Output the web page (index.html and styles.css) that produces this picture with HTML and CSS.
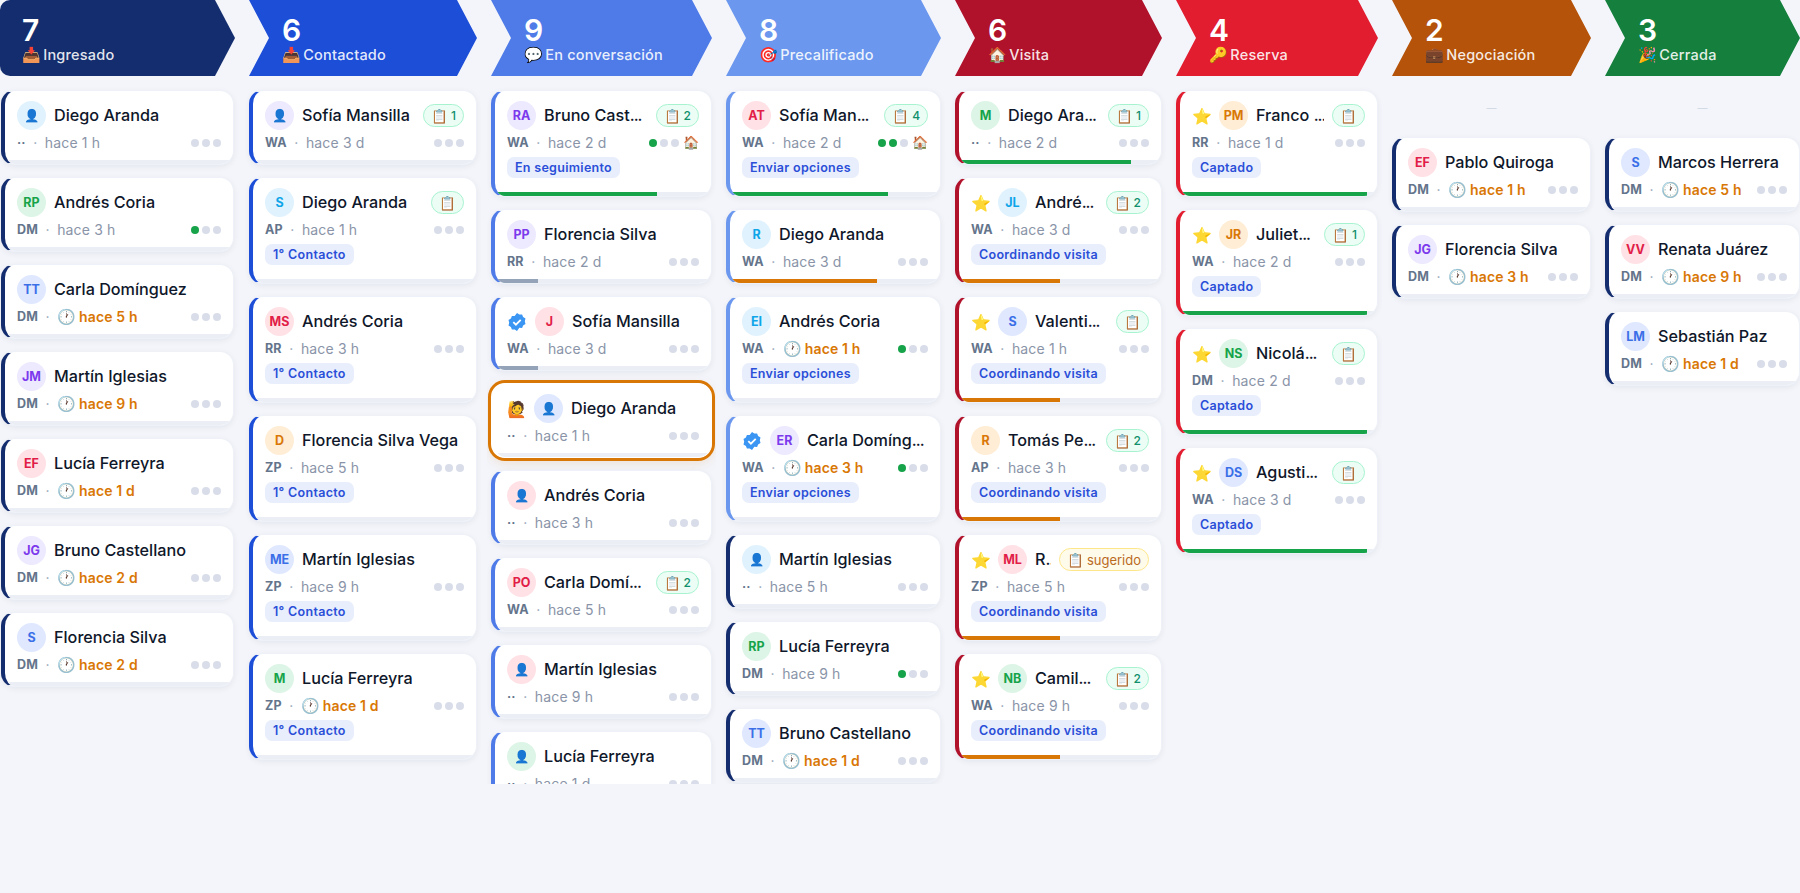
FILE: index.html
```html
<!DOCTYPE html>
<html lang="es">
<head>
<meta charset="UTF-8">
<title>Pipeline</title>
<link rel="stylesheet" href="styles.css">
</head>
<body>
<div class="board">

<div class="col col-ingresado">
  <div class="stage first"><div class="count">7</div><div class="label"><span class="emo">📥</span> Ingresado</div></div>
  <div class="cards">
    <div class="card"><div class="body"><div class="top"><span class="av sky">👤</span><span class="name">Diego Aranda</span></div><div class="meta"><b>··</b><i>·</i><span class="ago">hace 1 h</span><span class="dots"><u></u><u></u><u></u></span></div></div><div class="track"></div></div>
    <div class="card"><div class="body"><div class="top"><span class="av green">RP</span><span class="name">Andrés Coria</span></div><div class="meta"><b>DM</b><i>·</i><span class="ago">hace 3 h</span><span class="dots"><u class="on"></u><u></u><u></u></span></div></div><div class="track"></div></div>
    <div class="card"><div class="body"><div class="top"><span class="av blue">TT</span><span class="name">Carla Domínguez</span></div><div class="meta"><b>DM</b><i>·</i><span class="ago late"><span class="clock">🕐</span> hace 5 h</span><span class="dots"><u></u><u></u><u></u></span></div></div><div class="track"></div></div>
    <div class="card"><div class="body"><div class="top"><span class="av purple">JM</span><span class="name">Martín Iglesias</span></div><div class="meta"><b>DM</b><i>·</i><span class="ago late"><span class="clock">🕐</span> hace 9 h</span><span class="dots"><u></u><u></u><u></u></span></div></div><div class="track"></div></div>
    <div class="card"><div class="body"><div class="top"><span class="av red">EF</span><span class="name">Lucía Ferreyra</span></div><div class="meta"><b>DM</b><i>·</i><span class="ago late"><span class="clock">🕐</span> hace 1 d</span><span class="dots"><u></u><u></u><u></u></span></div></div><div class="track"></div></div>
    <div class="card"><div class="body"><div class="top"><span class="av purple">JG</span><span class="name">Bruno Castellano</span></div><div class="meta"><b>DM</b><i>·</i><span class="ago late"><span class="clock">🕐</span> hace 2 d</span><span class="dots"><u></u><u></u><u></u></span></div></div><div class="track"></div></div>
    <div class="card"><div class="body"><div class="top"><span class="av blue">S</span><span class="name">Florencia Silva</span></div><div class="meta"><b>DM</b><i>·</i><span class="ago late"><span class="clock">🕐</span> hace 2 d</span><span class="dots"><u></u><u></u><u></u></span></div></div><div class="track"></div></div>
  </div>
</div>

<div class="col col-contactado">
  <div class="stage"><div class="count">6</div><div class="label"><span class="emo">📥</span> Contactado</div></div>
  <div class="cards">
    <div class="card"><div class="body"><div class="top"><span class="av purple">👤</span><span class="name">Sofía Mansilla</span><span class="badge">📋 <em>1</em></span></div><div class="meta"><b>WA</b><i>·</i><span class="ago">hace 3 d</span><span class="dots"><u></u><u></u><u></u></span></div></div><div class="track"></div></div>
    <div class="card"><div class="body"><div class="top"><span class="av sky">S</span><span class="name">Diego Aranda</span><span class="badge">📋</span></div><div class="meta"><b>AP</b><i>·</i><span class="ago">hace 1 h</span><span class="dots"><u></u><u></u><u></u></span></div><div class="chip">1° Contacto</div></div><div class="track"></div></div>
    <div class="card"><div class="body"><div class="top"><span class="av red">MS</span><span class="name">Andrés Coria</span></div><div class="meta"><b>RR</b><i>·</i><span class="ago">hace 3 h</span><span class="dots"><u></u><u></u><u></u></span></div><div class="chip">1° Contacto</div></div><div class="track"></div></div>
    <div class="card"><div class="body"><div class="top"><span class="av orange">D</span><span class="name">Florencia Silva Vega</span></div><div class="meta"><b>ZP</b><i>·</i><span class="ago">hace 5 h</span><span class="dots"><u></u><u></u><u></u></span></div><div class="chip">1° Contacto</div></div><div class="track"></div></div>
    <div class="card"><div class="body"><div class="top"><span class="av blue">ME</span><span class="name">Martín Iglesias</span></div><div class="meta"><b>ZP</b><i>·</i><span class="ago">hace 9 h</span><span class="dots"><u></u><u></u><u></u></span></div><div class="chip">1° Contacto</div></div><div class="track"></div></div>
    <div class="card"><div class="body"><div class="top"><span class="av green">M</span><span class="name">Lucía Ferreyra</span></div><div class="meta"><b>ZP</b><i>·</i><span class="ago late"><span class="clock">🕐</span> hace 1 d</span><span class="dots"><u></u><u></u><u></u></span></div><div class="chip">1° Contacto</div></div><div class="track"></div></div>
  </div>
</div>

<div class="col col-conversacion">
  <div class="stage"><div class="count">9</div><div class="label"><span class="emo">💬</span> En conversación</div></div>
  <div class="cards">
    <div class="card"><div class="body"><div class="top"><span class="av purple">RA</span><span class="name">Bruno Cast<span class="more">...</span></span><span class="badge">📋 <em>2</em></span></div><div class="meta"><b>WA</b><i>·</i><span class="ago">hace 2 d</span><span class="dots"><u class="on"></u><u></u><u></u><span class="home">🏠</span></span></div><div class="chip">En seguimiento</div></div><div class="track"><div class="fill ok" style="width:75%"></div></div></div>
    <div class="card"><div class="body"><div class="top"><span class="av purple">PP</span><span class="name">Florencia Silva</span></div><div class="meta"><b>RR</b><i>·</i><span class="ago">hace 2 d</span><span class="dots"><u></u><u></u><u></u></span></div></div><div class="track"><div class="fill low" style="width:20%"></div></div></div>
    <div class="card"><div class="body"><div class="top"><svg class="check" viewBox="0 0 20 20"><path d="M10 1l2.3 1.6 2.8-.2 1 2.6 2.4 1.5-.7 2.7.7 2.7-2.4 1.5-1 2.6-2.8-.2L10 19l-2.3-1.6-2.8.2-1-2.6-2.4-1.5.7-2.7-.7-2.7L3.9 6.5l1-2.6 2.8.2z" fill="#3b96f3"/><path d="M6.3 10.2l2.6 2.5 4.8-4.8" fill="none" stroke="#fff" stroke-width="1.8"/></svg><span class="av red">J</span><span class="name">Sofía Mansilla</span></div><div class="meta"><b>WA</b><i>·</i><span class="ago">hace 3 d</span><span class="dots"><u></u><u></u><u></u></span></div></div><div class="track"><div class="fill low" style="width:20%"></div></div></div>
    <div class="card hot"><div class="body"><div class="top"><span class="mark">🙋</span><span class="av blue">👤</span><span class="name">Diego Aranda</span></div><div class="meta"><b>··</b><i>·</i><span class="ago">hace 1 h</span><span class="dots"><u></u><u></u><u></u></span></div></div><div class="track"></div></div>
    <div class="card"><div class="body"><div class="top"><span class="av red">👤</span><span class="name">Andrés Coria</span></div><div class="meta"><b>··</b><i>·</i><span class="ago">hace 3 h</span><span class="dots"><u></u><u></u><u></u></span></div></div><div class="track"></div></div>
    <div class="card"><div class="body"><div class="top"><span class="av red">PO</span><span class="name">Carla Domí<span class="more">...</span></span><span class="badge">📋 <em>2</em></span></div><div class="meta"><b>WA</b><i>·</i><span class="ago">hace 5 h</span><span class="dots"><u></u><u></u><u></u></span></div></div><div class="track"></div></div>
    <div class="card"><div class="body"><div class="top"><span class="av red">👤</span><span class="name">Martín Iglesias</span></div><div class="meta"><b>··</b><i>·</i><span class="ago">hace 9 h</span><span class="dots"><u></u><u></u><u></u></span></div></div><div class="track"></div></div>
    <div class="card"><div class="body"><div class="top"><span class="av green">👤</span><span class="name">Lucía Ferreyra</span></div><div class="meta"><b>··</b><i>·</i><span class="ago">hace 1 d</span><span class="dots"><u></u><u></u><u></u></span></div></div><div class="track"></div></div>
  </div>
</div>

<div class="col col-precalificado">
  <div class="stage"><div class="count">8</div><div class="label"><span class="emo">🎯</span> Precalificado</div></div>
  <div class="cards">
    <div class="card"><div class="body"><div class="top"><span class="av red">AT</span><span class="name">Sofía Man<span class="more">...</span></span><span class="badge">📋 <em>4</em></span></div><div class="meta"><b>WA</b><i>·</i><span class="ago">hace 2 d</span><span class="dots"><u class="on"></u><u class="on"></u><u></u><span class="home">🏠</span></span></div><div class="chip">Enviar opciones</div></div><div class="track"><div class="fill ok" style="width:75%"></div></div></div>
    <div class="card"><div class="body"><div class="top"><span class="av sky">R</span><span class="name">Diego Aranda</span></div><div class="meta"><b>WA</b><i>·</i><span class="ago">hace 3 d</span><span class="dots"><u></u><u></u><u></u></span></div></div><div class="track"><div class="fill warn" style="width:70%"></div></div></div>
    <div class="card"><div class="body"><div class="top"><span class="av sky">EI</span><span class="name">Andrés Coria</span></div><div class="meta"><b>WA</b><i>·</i><span class="ago late"><span class="clock">🕐</span> hace 1 h</span><span class="dots"><u class="on"></u><u></u><u></u></span></div><div class="chip">Enviar opciones</div></div><div class="track"></div></div>
    <div class="card"><div class="body"><div class="top"><svg class="check" viewBox="0 0 20 20"><path d="M10 1l2.3 1.6 2.8-.2 1 2.6 2.4 1.5-.7 2.7.7 2.7-2.4 1.5-1 2.6-2.8-.2L10 19l-2.3-1.6-2.8.2-1-2.6-2.4-1.5.7-2.7-.7-2.7L3.9 6.5l1-2.6 2.8.2z" fill="#3b96f3"/><path d="M6.3 10.2l2.6 2.5 4.8-4.8" fill="none" stroke="#fff" stroke-width="1.8"/></svg><span class="av purple">ER</span><span class="name">Carla Domíng<span class="more">...</span></span></div><div class="meta"><b>WA</b><i>·</i><span class="ago late"><span class="clock">🕐</span> hace 3 h</span><span class="dots"><u class="on"></u><u></u><u></u></span></div><div class="chip">Enviar opciones</div></div><div class="track"></div></div>
    <div class="card navy"><div class="body"><div class="top"><span class="av sky">👤</span><span class="name">Martín Iglesias</span></div><div class="meta"><b>··</b><i>·</i><span class="ago">hace 5 h</span><span class="dots"><u></u><u></u><u></u></span></div></div><div class="track"></div></div>
    <div class="card navy"><div class="body"><div class="top"><span class="av green">RP</span><span class="name">Lucía Ferreyra</span></div><div class="meta"><b>DM</b><i>·</i><span class="ago">hace 9 h</span><span class="dots"><u class="on"></u><u></u><u></u></span></div></div><div class="track"></div></div>
    <div class="card navy"><div class="body"><div class="top"><span class="av blue">TT</span><span class="name">Bruno Castellano</span></div><div class="meta"><b>DM</b><i>·</i><span class="ago late"><span class="clock">🕐</span> hace 1 d</span><span class="dots"><u></u><u></u><u></u></span></div></div><div class="track"></div></div>
  </div>
</div>

<div class="col col-visita">
  <div class="stage"><div class="count">6</div><div class="label"><span class="emo">🏠</span> Visita</div></div>
  <div class="cards">
    <div class="card"><div class="body"><div class="top"><span class="av green">M</span><span class="name">Diego Ara<span class="more">...</span></span><span class="badge">📋 <em>1</em></span></div><div class="meta"><b>··</b><i>·</i><span class="ago">hace 2 d</span><span class="dots"><u></u><u></u><u></u></span></div></div><div class="track"><div class="fill ok" style="width:85%"></div></div></div>
    <div class="card"><div class="body"><div class="top"><span class="mark">⭐</span><span class="av sky">JL</span><span class="name">André<span class="more">...</span></span><span class="badge">📋 <em>2</em></span></div><div class="meta"><b>WA</b><i>·</i><span class="ago">hace 3 d</span><span class="dots"><u></u><u></u><u></u></span></div><div class="chip">Coordinando visita</div></div><div class="track"><div class="fill warn" style="width:50%"></div></div></div>
    <div class="card"><div class="body"><div class="top"><span class="mark">⭐</span><span class="av blue">S</span><span class="name">Valenti<span class="more">...</span></span><span class="badge">📋</span></div><div class="meta"><b>WA</b><i>·</i><span class="ago">hace 1 h</span><span class="dots"><u></u><u></u><u></u></span></div><div class="chip">Coordinando visita</div></div><div class="track"><div class="fill warn" style="width:50%"></div></div></div>
    <div class="card"><div class="body"><div class="top"><span class="av orange">R</span><span class="name">Tomás Pe<span class="more">...</span></span><span class="badge">📋 <em>2</em></span></div><div class="meta"><b>AP</b><i>·</i><span class="ago">hace 3 h</span><span class="dots"><u></u><u></u><u></u></span></div><div class="chip">Coordinando visita</div></div><div class="track"><div class="fill warn" style="width:50%"></div></div></div>
    <div class="card"><div class="body"><div class="top"><span class="mark">⭐</span><span class="av red">ML</span><span class="name">R<span class="more">..</span></span><span class="badge amber">📋 <em>sugerido</em></span></div><div class="meta"><b>ZP</b><i>·</i><span class="ago">hace 5 h</span><span class="dots"><u></u><u></u><u></u></span></div><div class="chip">Coordinando visita</div></div><div class="track"><div class="fill warn" style="width:50%"></div></div></div>
    <div class="card"><div class="body"><div class="top"><span class="mark">⭐</span><span class="av green">NB</span><span class="name">Camil<span class="more">...</span></span><span class="badge">📋 <em>2</em></span></div><div class="meta"><b>WA</b><i>·</i><span class="ago">hace 9 h</span><span class="dots"><u></u><u></u><u></u></span></div><div class="chip">Coordinando visita</div></div><div class="track"><div class="fill warn" style="width:50%"></div></div></div>
  </div>
</div>

<div class="col col-reserva">
  <div class="stage"><div class="count">4</div><div class="label"><span class="emo">🔑</span> Reserva</div></div>
  <div class="cards">
    <div class="card"><div class="body"><div class="top"><span class="mark">⭐</span><span class="av orange">PM</span><span class="name">Franco <span class="more">...</span></span><span class="badge">📋</span></div><div class="meta"><b>RR</b><i>·</i><span class="ago">hace 1 d</span><span class="dots"><u></u><u></u><u></u></span></div><div class="chip">Captado</div></div><div class="track"><div class="fill ok" style="width:95%"></div></div></div>
    <div class="card"><div class="body"><div class="top"><span class="mark">⭐</span><span class="av orange">JR</span><span class="name">Juliet<span class="more">...</span></span><span class="badge">📋 <em>1</em></span></div><div class="meta"><b>WA</b><i>·</i><span class="ago">hace 2 d</span><span class="dots"><u></u><u></u><u></u></span></div><div class="chip">Captado</div></div><div class="track"><div class="fill ok" style="width:95%"></div></div></div>
    <div class="card"><div class="body"><div class="top"><span class="mark">⭐</span><span class="av green">NS</span><span class="name">Nicolá<span class="more">...</span></span><span class="badge">📋</span></div><div class="meta"><b>DM</b><i>·</i><span class="ago">hace 2 d</span><span class="dots"><u></u><u></u><u></u></span></div><div class="chip">Captado</div></div><div class="track"><div class="fill ok" style="width:95%"></div></div></div>
    <div class="card"><div class="body"><div class="top"><span class="mark">⭐</span><span class="av blue">DS</span><span class="name">Agusti<span class="more">...</span></span><span class="badge">📋</span></div><div class="meta"><b>WA</b><i>·</i><span class="ago">hace 3 d</span><span class="dots"><u></u><u></u><u></u></span></div><div class="chip">Captado</div></div><div class="track"><div class="fill ok" style="width:95%"></div></div></div>
  </div>
</div>

<div class="col col-negociacion">
  <div class="stage"><div class="count">2</div><div class="label"><span class="emo">💼</span> Negociación</div></div>
  <div class="cards">
    <div class="none">—</div>
    <div class="card navy"><div class="body"><div class="top"><span class="av red">EF</span><span class="name">Pablo Quiroga</span></div><div class="meta"><b>DM</b><i>·</i><span class="ago late"><span class="clock">🕐</span> hace 1 h</span><span class="dots"><u></u><u></u><u></u></span></div></div><div class="track"></div></div>
    <div class="card navy"><div class="body"><div class="top"><span class="av purple">JG</span><span class="name">Florencia Silva</span></div><div class="meta"><b>DM</b><i>·</i><span class="ago late"><span class="clock">🕐</span> hace 3 h</span><span class="dots"><u></u><u></u><u></u></span></div></div><div class="track"></div></div>
  </div>
</div>

<div class="col col-cerrada">
  <div class="stage"><div class="count">3</div><div class="label"><span class="emo">🎉</span> Cerrada</div></div>
  <div class="cards">
    <div class="none">—</div>
    <div class="card navy"><div class="body"><div class="top"><span class="av blue">S</span><span class="name">Marcos Herrera</span></div><div class="meta"><b>DM</b><i>·</i><span class="ago late"><span class="clock">🕐</span> hace 5 h</span><span class="dots"><u></u><u></u><u></u></span></div></div><div class="track"></div></div>
    <div class="card navy"><div class="body"><div class="top"><span class="av red">VV</span><span class="name">Renata Juárez</span></div><div class="meta"><b>DM</b><i>·</i><span class="ago late"><span class="clock">🕐</span> hace 9 h</span><span class="dots"><u></u><u></u><u></u></span></div></div><div class="track"></div></div>
    <div class="card navy"><div class="body"><div class="top"><span class="av blue">LM</span><span class="name">Sebastián Paz</span></div><div class="meta"><b>DM</b><i>·</i><span class="ago late"><span class="clock">🕐</span> hace 1 d</span><span class="dots"><u></u><u></u><u></u></span></div></div><div class="track"></div></div>
  </div>
</div>

</div>
</body>
</html>
```

FILE: styles.css
```css
*{margin:0;padding:0;box-sizing:border-box;}
html,body{height:100%;}
body{background:#f3f5fb;color:#0f172a;font-family:Inter,"Noto Sans",sans-serif;overflow:hidden;}

.board{display:grid;grid-template-columns:235px 228px 221px 215px 207px 202px 199px 195px;column-gap:14px;}
.col{min-width:0;}

/* Stage headers */
.stage{
height:76px;padding:14px 0 0 33px;color:#fff;background:var(--stage);
clip-path:polygon(0 0,calc(100% - 20px) 0,100% 50%,calc(100% - 20px) 100%,0 100%,20px 50%);
}
.stage.first{
padding-left:22px;border-radius:10px 0 0 10px;
clip-path:polygon(0 0,calc(100% - 20px) 0,100% 50%,calc(100% - 20px) 100%,0 100%);
}
.count{font-size:30px;line-height:32px;font-weight:600;}
.label{font-size:14.5px;line-height:17px;font-weight:500;letter-spacing:.2px;color:rgba(255,255,255,.9);white-space:nowrap;}
.emo{color:#000;font-size:15px;margin-right:-2px;}

.col-ingresado{--stage:#142d6e;--edge:#142d6e;}
.col-contactado{--stage:#1d4ed8;--edge:#1d4ed8;}
.col-conversacion{--stage:#4f7be8;--edge:#4f7be8;}
.col-precalificado{--stage:#6b97ee;--edge:#6b97ee;}
.col-visita{--stage:#b1122b;--edge:#b1122b;}
.col-reserva{--stage:#e11d2f;--edge:#e11d2f;}
.col-negociacion{--stage:#b45309;}
.col-cerrada{--stage:#15803d;}

/* Card list, padded so the ring and shadows are not clipped at the sides */
.cards{display:flex;flex-direction:column;gap:12px;margin:10px -4px 0;padding:4px 4px 0;height:698px;overflow:hidden;}
.col-ingresado .cards{padding:4px 5px 0;}
.none{height:35px;flex:none;display:flex;align-items:center;justify-content:center;color:#cbd5e1;font-size:10px;}

.card{
flex:none;background:#fff;border:1px solid #eef1f7;border-left:4px solid var(--edge,#142d6e);
border-radius:14px;overflow:hidden;box-shadow:0 2px 6px rgba(15,23,42,.06);
}
.card.navy{border-left-color:#142d6e;}
.card.hot{border-color:#fff;box-shadow:0 0 0 3px #d97706,0 4px 14px rgba(217,119,6,.2);}
.body{padding:10px 12px 9px;}
.top{display:flex;align-items:center;gap:8px;height:29px;}
.av{
flex:none;width:29px;height:29px;border-radius:50%;display:flex;align-items:center;justify-content:center;
font-size:12.5px;font-weight:700;
}
.sky{background:#e0f2fe;color:#0ea5e9;}
.purple{background:#ede9fe;color:#7c3aed;}
.green{background:#dcf5e6;color:#16a34a;}
.blue{background:#dfe8ff;color:#3b6fe8;}
.red{background:#ffe1e6;color:#e11d48;}
.orange{background:#ffedd5;color:#d97706;}
.mark{flex:none;width:19px;font-size:16px;line-height:20px;}
.check{flex:none;width:20px;height:20px;}
.name{flex:1;min-width:0;padding-bottom:2px;font-size:16.2px;font-weight:550;white-space:nowrap;overflow:hidden;}
.more{letter-spacing:-1px;}
.badge{
flex:none;height:23px;padding:0 7px;display:flex;align-items:center;gap:3px;border-radius:12px;
background:#ecfdf5;border:1px solid #a7f3d0;font-size:13.5px;
}
.badge em{font-style:normal;font-size:12px;font-weight:500;color:#0f8f6c;}
.badge.amber{background:#fffbeb;border-color:#fde68a;}
.badge.amber em{font-size:13px;font-weight:400;color:#b96a1e;}

.meta{display:flex;align-items:center;gap:7.5px;height:17px;margin-top:4px;font-size:14px;letter-spacing:.15px;color:#8a94a8;}
.meta b{font-size:12.5px;font-weight:700;color:#64748b;}
.meta i{font-style:normal;color:#94a3b8;}
.ago.late{color:#d97706;font-weight:600;}
.clock{font-size:15px;margin-right:-1px;}
.dots{margin-left:auto;display:flex;align-items:center;gap:3px;}
.dots u{width:8px;height:8px;border-radius:50%;background:#d8dde9;text-decoration:none;}
.dots u.on{background:#16a34a;}
.home{font-size:13px;line-height:13px;margin-left:1px;}
.chip{
display:block;width:fit-content;margin:6px 0 5px;padding:0 8px;height:21px;line-height:21px;border-radius:7px;
background:#e8eefc;color:#2b4fd8;font-size:12.5px;font-weight:600;letter-spacing:.3px;
}
.track{height:4px;background:#ebeef5;}
.fill{height:100%;}
.fill.ok{background:#16a34a;}
.fill.warn{background:#d97706;}
.fill.low{background:#94a3b8;}
```
